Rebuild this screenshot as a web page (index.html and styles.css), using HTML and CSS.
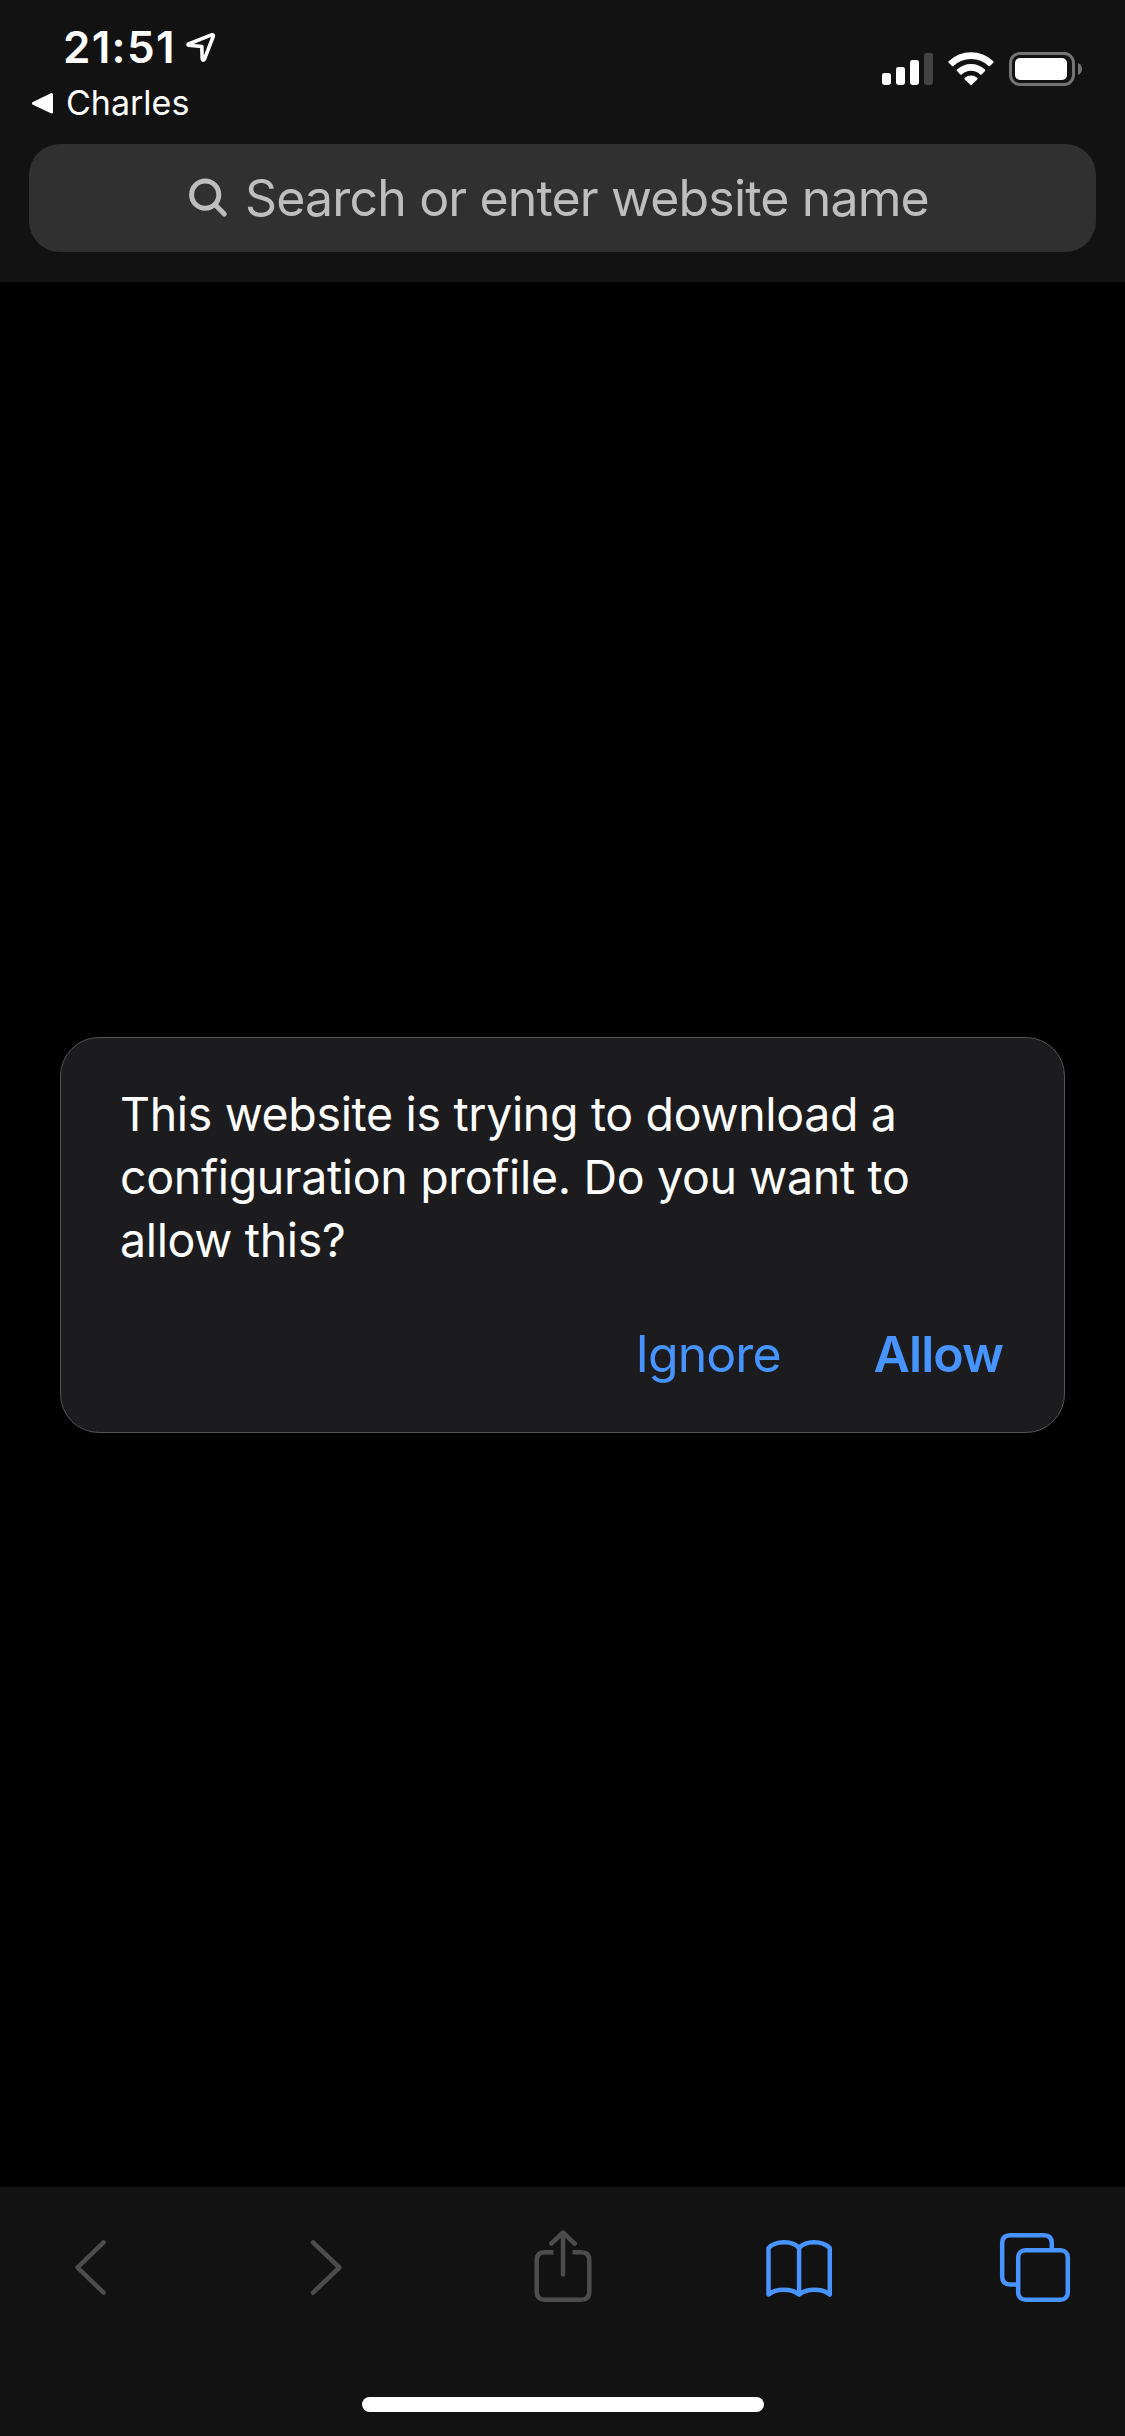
FILE: index.html
```html
<!DOCTYPE html>
<html lang="en">
<head>
  <meta charset="utf-8">
  <title>Safari</title>
  <link rel="stylesheet" href="styles.css">
</head>
<body>
  <div class="screen">
    <header class="header">
      <div class="status">
        <div class="status-left">
          <div class="clock">
            <span class="time">21:51</span>
            <svg class="location" width="32" height="32" viewBox="0 0 32 32"><path d="M3.400 14.200Q2.500 13.500 3.600 13L26.500 3.800Q29 3.200 28.200 5.500L19.500 28Q18 30.500 17.200 27.800L16.800 15.500Z"/></svg>
          </div>
          <div class="back-app">
            <svg class="triangle" width="24" height="24" viewBox="0 0 24 24"><path d="M2.5 12.3 20.5 3.5V21Z"/></svg>
            <span>Charles</span>
          </div>
        </div>
        <div class="status-right">
          <svg class="signal" width="51" height="34" viewBox="0 0 51 34">
            <rect x="0" y="21" width="9" height="12" rx="2.4"/>
            <rect x="14" y="15" width="9" height="18" rx="2.4"/>
            <rect x="28" y="8" width="9" height="25" rx="2.4"/>
            <rect class="dim" x="42" y="1" width="9" height="32" rx="2.4"/>
          </svg>
          <svg class="wifi" width="46" height="34" viewBox="0 0 46 34">
            <path d="M.7 9.2a32 32 0 0 1 44.6 0q.7.8 0 1.5l-3.3 3.3q-.7.7-1.5 0a25.3 25.3 0 0 0-35 0q-.8.7-1.5 0L.7 10.7q-.7-.7 0-1.5Z"/>
            <path d="M9 17.6a20.200 20.200 0 0 1 28 0q.8.8 0 1.5l-3.300 3.300q-.7.7-1.500 0a13.500 13.500 0 0 0-18.400 0q-.8.7-1.500 0L9 19.100q-.8-.7 0-1.500Z"/>
            <path d="M16.900 25.800a9.400 9.400 0 0 1 12.200 0q.9.8.1 1.600l-5.500 5.400q-.7.700-1.400 0l-5.500-5.400q-.8-.8.1-1.600Z"/>
          </svg>
          <svg class="battery" width="74" height="34" viewBox="0 0 74 34">
            <rect class="case" x="1.500" y="1.500" width="63" height="31" rx="9.500"/>
            <path class="nub" d="M69 11c5.300 2 5.300 10 0 12Z"/>
            <rect class="charge" x="6" y="6" width="52" height="22" rx="5"/>
          </svg>
        </div>
      </div>
      <div class="search">
        <svg width="40" height="40" viewBox="0 0 40 40"><circle cx="17.200" cy="16.700" r="13.600"/><path d="M27 26.500 36.300 36"/></svg>
        <span>Search or enter website name</span>
      </div>
    </header>

    <main class="content">
      <section class="dialog">
        <p class="message">This website is trying to download a<br>configuration profile. Do you want to<br>allow this?</p>
        <div class="actions">
          <button class="action">Ignore</button>
          <button class="action primary">Allow</button>
        </div>
      </section>
    </main>

    <footer class="footer">
      <nav class="toolbar">
        <svg class="icon disabled" width="72" height="76" viewBox="0 0 72 76"><path d="M49.600 12.300 23.500 37.500 49.600 62.700"/></svg>
        <svg class="icon disabled" width="72" height="76" viewBox="0 0 72 76"><path d="M23 12.300 49.400 37.500 23 62.700"/></svg>
        <svg class="icon disabled" width="72" height="76" viewBox="0 0 72 76"><path class="butt" d="M26.500 22.300H17.700q-8 0-8 8V61.700q0 8 8 8H54.300q8 0 8-8V30.300q0-8-8-8H45.500"/><path d="M36 44.500V3.500M24.300 13.700 36 2.500 47.700 13.700"/></svg>
        <svg class="icon" width="72" height="76" viewBox="0 0 72 76"><path d="M36.100 64.500V18C30 10.500 13 10 5.500 18V64.500C13 58 28.500 58 36.100 64.500 43.700 58 59.200 58 66.800 64.500V18C59.200 10 42.200 10.500 36.100 18"/></svg>
        <svg class="icon" width="72" height="76" viewBox="0 0 72 76"><path class="butt" d="M52.800 18V13.200q0-8-8-8H11.200q-8 0-8 8V46.500q0 8 8 8H18"/><rect x="19.200" y="20.200" width="49.600" height="49.600" rx="7"/></svg>
      </nav>
      <div class="home-indicator"></div>
    </footer>
  </div>
</body>
</html>
```
FILE: styles.css
```css
* {
  box-sizing: border-box;
}

body {
  margin: 0;
  background: #000;
  color: #fff;
  font-family: Inter, "Liberation Sans", sans-serif;
}

svg {
  display: block;
  flex: none;
}

.screen {
  display: flex;
  flex-direction: column;
  width: 1125px;
  height: 2436px;
  background: #000;
}

/* Status bar and address field */
.header {
  height: 282px;
  padding: 24px 29px 0;
  background: #121212;
}

.status {
  display: flex;
  justify-content: space-between;
  height: 120px;
}

.clock {
  display: flex;
  align-items: center;
  gap: 9px;
  height: 46px;
  padding-left: 34px;
}

.time {
  font-size: 44px;
  font-weight: 600;
  line-height: 46px;
  letter-spacing: 1.3px;
}

.location {
  fill: none;
  stroke: #fff;
  stroke-width: 3.6;
  stroke-linejoin: round;
}

.back-app {
  display: flex;
  align-items: center;
  gap: 11px;
  margin-top: 13px;
  padding-left: 2px;
  font-size: 34px;
  line-height: 40px;
}

.triangle {
  fill: #fff;
  stroke: #fff;
  stroke-width: 3;
  stroke-linejoin: round;
}

.status-right {
  display: flex;
  align-items: flex-start;
  gap: 15px;
  padding: 28px 13px 0 0;
  fill: #fff;
}

.dim {
  fill: #434343;
}

.case {
  fill: none;
  stroke: #757575;
  stroke-width: 3;
}

.nub {
  fill: #757575;
}

.search {
  display: flex;
  align-items: center;
  justify-content: center;
  gap: 17px;
  height: 108px;
  padding-right: 8px;
  border-radius: 31px;
  background: #303030;
  color: #bebebe;
  font-size: 50px;
  letter-spacing: -0.84px;
}

.search svg {
  fill: none;
  stroke: #bebebe;
  stroke-width: 5;
  stroke-linecap: round;
}

/* Page area with the permission dialog */
.content {
  flex: 1;
  padding: 755px 60px 0;
}

.dialog {
  height: 396px;
  padding: 45px 61px 0 59px;
  border: 1px solid #545456;
  border-radius: 39px;
  background: #1c1c1e;
}

.message {
  margin: 0;
  font-size: 46.5px;
  line-height: 63px;
  letter-spacing: -0.34px;
}

.actions {
  display: flex;
  justify-content: flex-end;
  gap: 93px;
  margin-top: 52px;
}

.action {
  padding: 0;
  border: 0;
  background: none;
  color: #4793ff;
  font: 400 50px/60px Inter, "Liberation Sans", sans-serif;
  letter-spacing: -0.96px;
}

.primary {
  font-weight: 600;
}

/* Browser toolbar */
.footer {
  display: flex;
  flex-direction: column;
  align-items: center;
  justify-content: space-between;
  height: 249px;
  padding: 43px 54px 24px;
  background: #121212;
}

.toolbar {
  display: flex;
  align-items: center;
  justify-content: space-between;
  width: 100%;
}

.icon {
  fill: none;
  stroke: #4793ff;
  stroke-width: 4.5;
  stroke-linecap: round;
  stroke-linejoin: round;
}

.disabled {
  stroke: #4c4c4c;
}

.butt {
  stroke-linecap: butt;
}

.home-indicator {
  width: 402px;
  height: 15px;
  border-radius: 7.5px;
  background: #fff;
}
```
